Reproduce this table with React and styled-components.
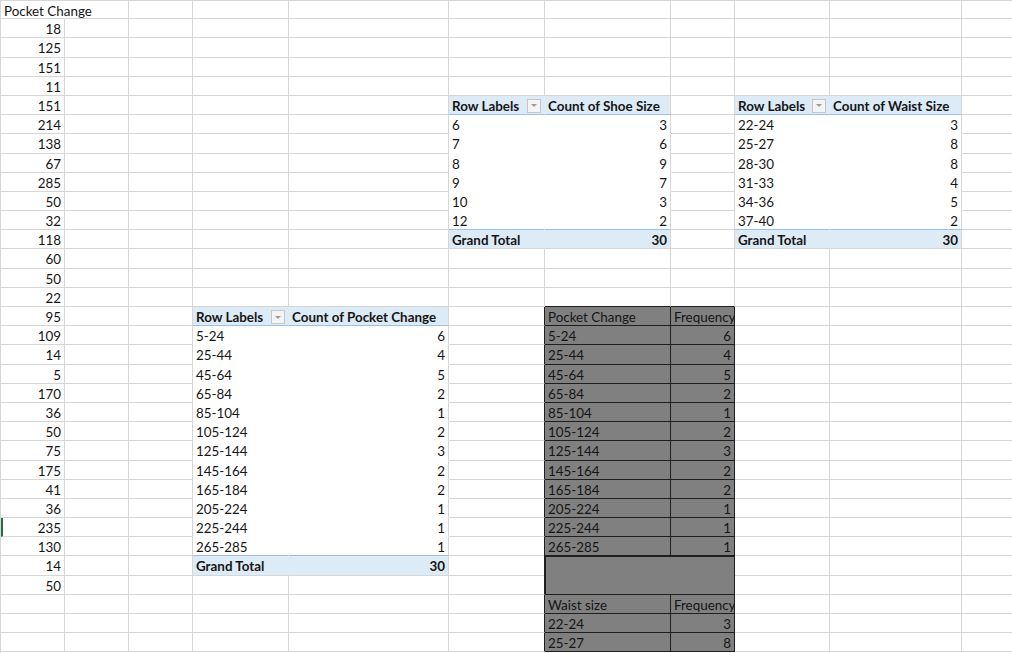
import React from 'react'
import styled, { createGlobalStyle } from 'styled-components'

const GRID = '#d6d6d6'
const DARK = '#1f1f1f'
const BLUE = '#9bc2e6'
const FILL = '#ddebf7'
const GRAY = '#808080'

const COLS = [64, 64, 64, 96, 160, 96, 126, 64, 95, 132, 60]
const ROWS = 34

const GlobalStyle = createGlobalStyle`
    html, body {
        margin: 0;
        padding: 0;
        background: #fff;
    }
    body {
        font-family: Lato, "Open Sans", sans-serif;
    }
`

const Sheet = styled.div`
    display: grid;
    grid-template-columns: ${COLS.map(w => w + 'px').join(' ')};
    grid-template-rows: 18.2px repeat(${ROWS - 1}, 19.2px);
    width: 1012px;
    height: 653px;
    overflow: hidden;
    border-top: 1px solid ${GRID};
    border-left: 1px solid ${GRID};
    box-sizing: border-box;
    background: #fff;
`

const Cell = styled.div`
    box-sizing: border-box;
    display: flex;
    align-items: flex-start;
    justify-content: ${p => p.$align === 'right' ? 'flex-end' : 'flex-start'};
    padding: 2px 3px 0 3px;
    background: ${p => p.$bg};
    border-right: 1px solid ${p => p.$right};
    border-bottom: 1px solid ${p => p.$bottom};
    border-left: ${p => p.$mark ? '2px solid #217346' : 'none'};
    box-shadow: ${p => p.$boxed ? `inset 1px 1px 0 ${DARK}, -1px -1px 0 ${DARK}` : 'none'};
    grid-column: span ${p => p.$colSpan || 1};
    grid-row: span ${p => p.$rowSpan || 1};
    font-size: 13.4px;
    line-height: 16px;
    font-weight: ${p => p.$bold ? 700 : 400};
    color: #151515;
    white-space: nowrap;
    overflow: ${p => p.$spill ? 'visible' : 'hidden'};
    min-width: 0;
`

const FilterButton = styled.span`
    box-sizing: border-box;
    flex: none;
    width: 14px;
    height: 14px;
    margin: 1px 0 0 auto;
    border: 1px solid #c6c6c6;
    background: #f4f4f4;
    display: flex;
    align-items: center;
    justify-content: center;

    &::after {
        content: '';
        border-left: 3px solid transparent;
        border-right: 3px solid transparent;
        border-top: 3px solid #9a9a9a;
    }
`

const pocketChange = [18, 125, 151, 11, 151, 214, 138, 67, 285, 50, 32, 118, 60, 50, 22,
    95, 109, 14, 5, 170, 36, 50, 75, 175, 41, 36, 235, 130, 14, 50]

const shoeSizes = [['6', 3], ['7', 6], ['8', 9], ['9', 7], ['10', 3], ['12', 2]]
const waistSizes = [['22-24', 3], ['25-27', 8], ['28-30', 8], ['31-33', 4], ['34-36', 5], ['37-40', 2]]
const pocketBins = [['5-24', 6], ['25-44', 4], ['45-64', 5], ['65-84', 2], ['85-104', 1], ['105-124', 2],
    ['125-144', 3], ['145-164', 2], ['165-184', 2], ['205-224', 1], ['225-244', 1], ['265-285', 1]]

// cells keyed "row,col" (1-based, like the sheet)
const cells = {}
const kinds = {}

function put(r, c, spec) {
    cells[r + ',' + c] = spec
}

function pivot(top, col, label, rows) {
    put(top, col, { text: 'Row Labels', bold: true, button: true })
    put(top, col + 1, { text: label, bold: true })
    kinds[top + ',' + col] = kinds[top + ',' + (col + 1)] = 'head'
    rows.forEach(([name, n], i) => {
        const r = top + 1 + i
        const kind = i === rows.length - 1 ? 'bodyEnd' : 'body'
        put(r, col, { text: name })
        put(r, col + 1, { text: n, align: 'right' })
        kinds[r + ',' + col] = kinds[r + ',' + (col + 1)] = kind
    })
    const total = top + 1 + rows.length
    put(total, col, { text: 'Grand Total', bold: true })
    put(total, col + 1, { text: rows.reduce((s, [, n]) => s + n, 0), bold: true, align: 'right' })
    kinds[total + ',' + col] = kinds[total + ',' + (col + 1)] = 'total'
}

put(1, 1, { text: 'Pocket Change', spill: true })
pocketChange.forEach((v, i) => put(i + 2, 1, { text: v, align: 'right', mark: i + 2 === 28 }))

pivot(6, 6, 'Count of Shoe Size', shoeSizes)
pivot(6, 9, 'Count of Waist Size', waistSizes)
pivot(17, 4, 'Count of Pocket Change', pocketBins)

// frequency table, grey block G17:H34
for (let r = 17; r <= 34; r++) {
    kinds[r + ',7'] = kinds[r + ',8'] = 'gray'
}
put(17, 7, { text: 'Pocket Change' })
put(17, 8, { text: 'Frequency' })
pocketBins.forEach(([name, n], i) => {
    put(18 + i, 7, { text: name })
    put(18 + i, 8, { text: n, align: 'right' })
})
put(30, 7, { colSpan: 2, rowSpan: 2, boxed: true })
put(32, 7, { text: 'Waist size' })
put(32, 8, { text: 'Frequency' })
put(33, 7, { text: '22-24' })
put(33, 8, { text: 3, align: 'right' })
put(34, 7, { text: '25-27' })
put(34, 8, { text: 8, align: 'right' })

const skip = new Set(['30,8', '31,7', '31,8'])

const isPivot = k => k === 'head' || k === 'body' || k === 'bodyEnd' || k === 'total'

function background(kind) {
    if (kind === 'gray') return GRAY
    if (kind === 'head' || kind === 'total') return FILL
    if (kind === 'body' || kind === 'bodyEnd') return '#fff'
    return 'transparent'
}

function rightBorder(r, c, kind, spec) {
    const next = kinds[r + ',' + (c + (spec.colSpan || 1))]
    if (kind === 'gray' || next === 'gray') return DARK
    if (isPivot(kind) && next === kind) return background(kind)
    if (spec.spill) return 'transparent'
    return GRID
}

function bottomBorder(r, c, kind, spec) {
    const below = kinds[(r + (spec.rowSpan || 1)) + ',' + c]
    if (kind === 'gray' || below === 'gray') return DARK
    if (kind === 'head' || kind === 'bodyEnd') return BLUE
    if (kind === 'body') return '#fff'
    return GRID
}

export default function App() {
    const out = []
    for (let r = 1; r <= ROWS; r++) {
        for (let c = 1; c <= COLS.length; c++) {
            const key = r + ',' + c
            if (skip.has(key)) continue
            const spec = cells[key] || {}
            const kind = kinds[key]
            out.push(
                <Cell
                    key={key}
                    $bg={background(kind)}
                    $right={rightBorder(r, c, kind, spec)}
                    $bottom={bottomBorder(r, c, kind, spec)}
                    $align={spec.align}
                    $bold={spec.bold}
                    $spill={spec.spill}
                    $mark={spec.mark}
                    $boxed={spec.boxed}
                    $colSpan={spec.colSpan}
                    $rowSpan={spec.rowSpan}
                >
                    {spec.text}
                    {spec.button && <FilterButton />}
                </Cell>
            )
        }
    }

    return (
        <>
            <GlobalStyle />
            <Sheet>{out}</Sheet>
        </>
    )
}
